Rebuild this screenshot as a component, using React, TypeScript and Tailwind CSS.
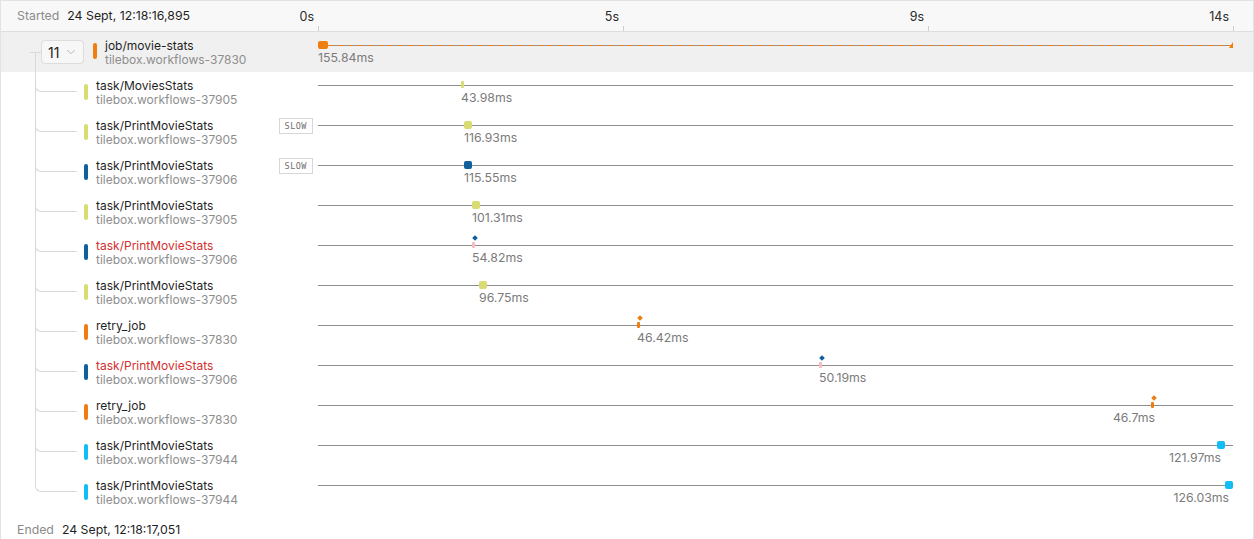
import React from 'react';
import { ChevronDown } from 'lucide-react';

type Kind = 'yellow' | 'blue' | 'orange' | 'cyan';
type Marker = 'tick' | 'square' | 'retry';

const barColor: Record<Kind, string> = {
    yellow: 'bg-[#d9dc72]',
    blue: 'bg-[#11609e]',
    orange: 'bg-[#ef7d10]',
    cyan: 'bg-[#10bdf5]',
};

interface Task {
    name: string;
    runner: string;
    kind: Kind;
    marker: Marker;
    at: number; // px from axis start, out of 915
    duration: string;
    failed?: boolean;
    slow?: boolean;
    alignRight?: boolean;
}

const AXIS = 915;

const tasks: Task[] = [
    { name: 'task/MoviesStats', runner: 'tilebox.workflows-37905', kind: 'yellow', marker: 'tick', at: 143, duration: '43.98ms' },
    { name: 'task/PrintMovieStats', runner: 'tilebox.workflows-37905', kind: 'yellow', marker: 'square', at: 146, duration: '116.93ms', slow: true },
    { name: 'task/PrintMovieStats', runner: 'tilebox.workflows-37906', kind: 'blue', marker: 'square', at: 146, duration: '115.55ms', slow: true },
    { name: 'task/PrintMovieStats', runner: 'tilebox.workflows-37905', kind: 'yellow', marker: 'square', at: 154, duration: '101.31ms' },
    { name: 'task/PrintMovieStats', runner: 'tilebox.workflows-37906', kind: 'blue', marker: 'retry', at: 154, duration: '54.82ms', failed: true },
    { name: 'task/PrintMovieStats', runner: 'tilebox.workflows-37905', kind: 'yellow', marker: 'square', at: 161, duration: '96.75ms' },
    { name: 'retry_job', runner: 'tilebox.workflows-37830', kind: 'orange', marker: 'retry', at: 319, duration: '46.42ms' },
    { name: 'task/PrintMovieStats', runner: 'tilebox.workflows-37906', kind: 'blue', marker: 'retry', at: 501, duration: '50.19ms', failed: true },
    { name: 'retry_job', runner: 'tilebox.workflows-37830', kind: 'orange', marker: 'retry', at: 833, duration: '46.7ms', alignRight: true },
    { name: 'task/PrintMovieStats', runner: 'tilebox.workflows-37944', kind: 'cyan', marker: 'square', at: 899, duration: '121.97ms', alignRight: true },
    { name: 'task/PrintMovieStats', runner: 'tilebox.workflows-37944', kind: 'cyan', marker: 'square', at: 907, duration: '126.03ms', alignRight: true },
];

const ticks = [
    { label: '0s', pos: 0 },
    { label: '5s', pos: 1 / 3 },
    { label: '9s', pos: 2 / 3 },
    { label: '14s', pos: 1 },
];

const pct = (px: number) => `${(px / AXIS) * 100}%`;

const TaskMarker: React.FC<{ task: Task }> = ({ task }) => {
    const color = barColor[task.kind];
    if (task.marker === 'tick') {
        return <div className={`absolute top-[9px] h-[7px] w-[3px] rounded-[1px] ${color}`} style={{ left: pct(task.at) }} />;
    }
    if (task.marker === 'square') {
        return <div className={`absolute top-[9px] h-2 w-2 rounded-[2px] ${color}`} style={{ left: pct(task.at) }} />;
    }
    const dot = task.kind === 'orange' ? 'bg-[#ef7d10]' : 'bg-[#11609e]';
    const stem = task.failed ? 'bg-[#f7bcbf]' : 'bg-[#ef7d10]';
    return (
        <div className="absolute top-0 h-4 w-[6px]" style={{ left: pct(task.at) }}>
            <div className={`absolute left-[1px] top-[4px] h-[4px] w-[4px] rotate-45 ${dot}`} />
            <div className={`absolute left-0 top-[10px] h-[6px] w-[2.5px] rounded-[1px] ${stem}`} />
        </div>
    );
};

const TaskRow: React.FC<{ task: Task; last: boolean }> = ({ task, last }) => (
    <div className="flex h-10">
        <div className="relative flex w-[317px] shrink-0 items-start">
            <div className="absolute left-[34px] top-[-20px] h-10 w-[42px] rounded-bl-[6px] border-b-[1.5px] border-l-[1.5px] border-[#d9d9d9]" />
            {!last && <div className="absolute left-[34px] top-0 h-10 border-l-[1.5px] border-[#d9d9d9]" />}
            <div className={`ml-[83px] mt-3 h-4 w-1 rounded-full ${barColor[task.kind]}`} />
            <div className="ml-2 mt-[7px] text-[12px] leading-[14px]">
                <div className={task.failed ? 'text-[#d3302f]' : 'text-[#1f1f1f]'}>{task.name}</div>
                <div className="text-[#8e8e8e]">{task.runner}</div>
            </div>
            {task.slow && (
                <span className="ml-auto mr-[5px] mt-[6px] flex h-4 items-center border border-[#d8d8d8] px-[5px] font-['DejaVu_Sans_Mono',monospace] text-[8.5px] tracking-[0.5px] text-[#6f6f6f]">
                    SLOW
                </span>
            )}
        </div>
        <div className="flex-1 pr-5">
            <div className="relative h-full">
                <div className="absolute left-0 right-0 top-[13px] h-px bg-[#8d8d8d]" />
                <TaskMarker task={task} />
                <div
                    className={`absolute top-[19px] whitespace-nowrap text-[12.3px] leading-[14px] text-[#7b7b7b] ${task.alignRight ? '-translate-x-full' : ''}`}
                    style={{ left: task.alignRight ? `calc(${pct(task.at)} + 4px)` : pct(task.at) }}
                >
                    {task.duration}
                </div>
            </div>
        </div>
    </div>
);

const App: React.FC = () => {
    return (
        <div className="min-h-screen bg-white font-['Inter','Noto_Sans',sans-serif]">
            <div className="border border-[#e3e3e3]">
                {/* header with time axis */}
                <div className="flex h-[31px] border-b border-[#dedede] bg-[#f8f8f8]">
                    <div className="flex w-[317px] shrink-0 items-center gap-2 pl-4 text-[12.3px]">
                        <span className="text-[#8a8a8a]">Started</span>
                        <span className="text-[#1f1f1f]">24 Sept, 12:18:16,895</span>
                    </div>
                    <div className="flex-1 pr-5">
                        <div className="relative h-full">
                            {ticks.map(t => (
                                <React.Fragment key={t.label}>
                                    <div
                                        className="absolute top-[9px] -translate-x-full pr-1 text-[12.5px] leading-[14px] text-[#2a2a2a]"
                                        style={{ left: `${t.pos * 100}%` }}
                                    >
                                        {t.label}
                                    </div>
                                    <div className="absolute bottom-0 h-[5px] w-px bg-[#cdcdcd]" style={{ left: `${t.pos * 100}%` }} />
                                </React.Fragment>
                            ))}
                        </div>
                    </div>
                </div>

                {/* job row */}
                <div className="flex h-10 bg-[#f0f0f0]">
                    <div className="relative flex w-[317px] shrink-0 items-start">
                        <div className="absolute left-[29px] top-[20px] w-[11px] border-t-[1.5px] border-[#d9d9d9]" />
                        <button className="ml-10 mt-2 flex h-6 w-[43px] items-center rounded-[4px] border border-[#dcdcdc] bg-[#f7f7f7] pl-[6px] text-[14px] text-[#1f1f1f]">
                            11
                            <ChevronDown size={14} strokeWidth={1.25} className="ml-auto mr-[5px] text-[#a0a0a0]" />
                        </button>
                        <div className="ml-[9px] mt-[11px] h-4 w-1 rounded-full bg-[#ef7d10]" />
                        <div className="ml-2 mt-[7px] text-[12px] leading-[14px]">
                            <div className="text-[#1f1f1f]">job/movie-stats</div>
                            <div className="text-[#8e8e8e]">tilebox.workflows-37830</div>
                        </div>
                    </div>
                    <div className="flex-1 pr-5">
                        <div className="relative h-full">
                            <div className="absolute left-0 right-0 top-[13px] h-px bg-[repeating-linear-gradient(90deg,#ef7d10_0_5px,#9a8f86_5px_10px)]" />
                            <div className="absolute left-0 top-[9px] h-2 w-[10px] rounded-[2px] bg-[#ef7d10]" />
                            <div className="absolute right-0 top-[10px] h-0 w-0 border-b-[6px] border-l-[4px] border-b-[#ef7d10] border-l-transparent" />
                            <div className="absolute left-0 top-[19px] text-[12.3px] leading-[14px] text-[#7b7b7b]">155.84ms</div>
                        </div>
                    </div>
                </div>

                {tasks.map((t, i) => (
                    <TaskRow key={i} task={t} last={i === tasks.length - 1} />
                ))}

                {/* footer */}
                <div className="flex h-8 items-center gap-2 pl-4 pt-1 text-[12.3px]">
                    <span className="text-[#8a8a8a]">Ended</span>
                    <span className="text-[#1f1f1f]">24 Sept, 12:18:17,051</span>
                </div>
            </div>
        </div>
    );
};

export default App;
